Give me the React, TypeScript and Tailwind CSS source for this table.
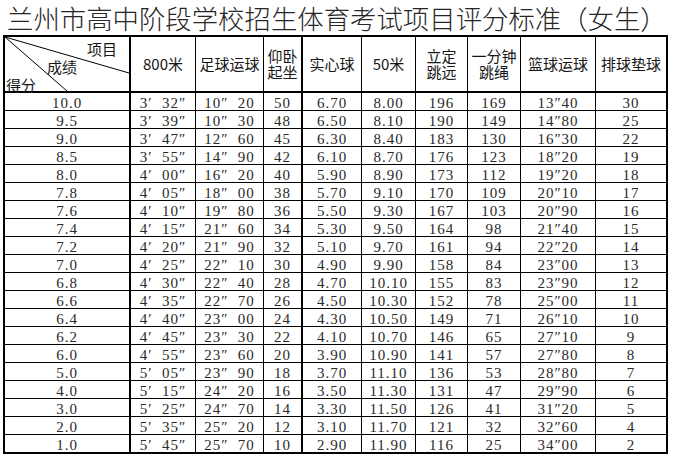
const rows: string[][] = [
  ["10.0", "3′  32″", "10″  20", "50", "6.70", "8.00", "196", "169", "13″40", "30"],
  ["9.5", "3′  39″", "10″  30", "48", "6.50", "8.10", "190", "149", "14″80", "25"],
  ["9.0", "3′  47″", "12″  60", "45", "6.30", "8.40", "183", "130", "16″30", "22"],
  ["8.5", "3′  55″", "14″  90", "42", "6.10", "8.70", "176", "123", "18″20", "19"],
  ["8.0", "4′  00″", "16″  20", "40", "5.90", "8.90", "173", "112", "19″20", "18"],
  ["7.8", "4′  05″", "18″  00", "38", "5.70", "9.10", "170", "109", "20″10", "17"],
  ["7.6", "4′  10″", "19″  80", "36", "5.50", "9.30", "167", "103", "20″90", "16"],
  ["7.4", "4′  15″", "21″  60", "34", "5.30", "9.50", "164", "98", "21″40", "15"],
  ["7.2", "4′  20″", "21″  90", "32", "5.10", "9.70", "161", "94", "22″20", "14"],
  ["7.0", "4′  25″", "22″  10", "30", "4.90", "9.90", "158", "84", "23″00", "13"],
  ["6.8", "4′  30″", "22″  40", "28", "4.70", "10.10", "155", "83", "23″90", "12"],
  ["6.6", "4′  35″", "22″  70", "26", "4.50", "10.30", "152", "78", "25″00", "11"],
  ["6.4", "4′  40″", "23″  00", "24", "4.30", "10.50", "149", "71", "26″10", "10"],
  ["6.2", "4′  45″", "23″  30", "22", "4.10", "10.70", "146", "65", "27″10", "9"],
  ["6.0", "4′  55″", "23″  60", "20", "3.90", "10.90", "141", "57", "27″80", "8"],
  ["5.0", "5′  05″", "23″  90", "18", "3.70", "11.10", "136", "53", "28″80", "7"],
  ["4.0", "5′  15″", "24″  20", "16", "3.50", "11.30", "131", "47", "29″90", "6"],
  ["3.0", "5′  25″", "24″  70", "14", "3.30", "11.50", "126", "41", "31″20", "5"],
  ["2.0", "5′  35″", "25″  20", "12", "3.10", "11.70", "121", "32", "32″60", "4"],
  ["1.0", "5′  45″", "25″  70", "10", "2.90", "11.90", "116", "25", "34″00", "2"],
];

// right border per column: col 1 and 仰卧起坐 are thick, last column has none (outer border)
const rightBorder = [
  "border-r-2",
  "border-r",
  "border-r",
  "border-r-2",
  "border-r",
  "border-r",
  "border-r",
  "border-r",
  "border-r",
  "",
];

const headers: string[][] = [
  ["800米"],
  ["足球运球"],
  ["仰卧", "起坐"],
  ["实心球"],
  ["50米"],
  ["立定", "跳远"],
  ["一分钟", "跳绳"],
  ["篮球运球"],
  ["排球垫球"],
];

export default function App() {
  return (
    <div className="w-[673px] h-[457px] bg-white text-[#161616] overflow-hidden">
      <div className="h-[35px] pt-[2px] pl-[7px] font-['Noto_Sans_CJK_SC',sans-serif] font-light text-[26.4px] leading-[32px] whitespace-nowrap text-[#262626]">
        兰州市高中阶段学校招生体育考试项目评分标准（女生）
      </div>
      <div className="ml-[3px] w-[665px] border-2 border-black grid grid-cols-[126px_65px_68px_39px_59px_54px_52px_53px_75px_70px]">
        {/* header row */}
        <div className="relative h-[56px] border-r-2 border-b-2 border-black font-['Noto_Sans_CJK_SC',sans-serif] text-[15px] leading-[15px]">
          <svg className="absolute left-0 top-0" width="124" height="54" viewBox="0 0 124 54">
            <line x1="0" y1="0" x2="124" y2="36" stroke="#000" strokeWidth="1" />
            <line x1="0" y1="0" x2="62" y2="54" stroke="#000" strokeWidth="1" />
          </svg>
          <span className="absolute left-[82px] top-[4px]">项目</span>
          <span className="absolute left-[42px] top-[22px]">成绩</span>
          <span className="absolute left-[1px] top-[40px]">得分</span>
        </div>
        {headers.map((lines, i) => (
          <div
            key={i}
            className={`h-[56px] border-b-2 border-black ${rightBorder[i + 1]} flex flex-col items-center justify-center font-['Noto_Sans_CJK_SC',sans-serif] text-[15px] leading-[16px] whitespace-nowrap`}
          >
            {lines.map((l) => (
              <span key={l}>{l}</span>
            ))}
          </div>
        ))}
        {/* data rows */}
        {rows.map((row, r) =>
          row.map((cell, c) => (
            <div
              key={`${r}-${c}`}
              className={`${r === rows.length - 1 ? "h-[17px]" : "h-[18px] border-b"} border-black ${rightBorder[c]} text-center whitespace-pre font-['Liberation_Serif','Noto_Sans_CJK_SC',serif] text-[15px] leading-[21px] tracking-[1px] text-[#2a2a2a]`}
            >
              {cell}
            </div>
          ))
        )}
      </div>
    </div>
  );
}
